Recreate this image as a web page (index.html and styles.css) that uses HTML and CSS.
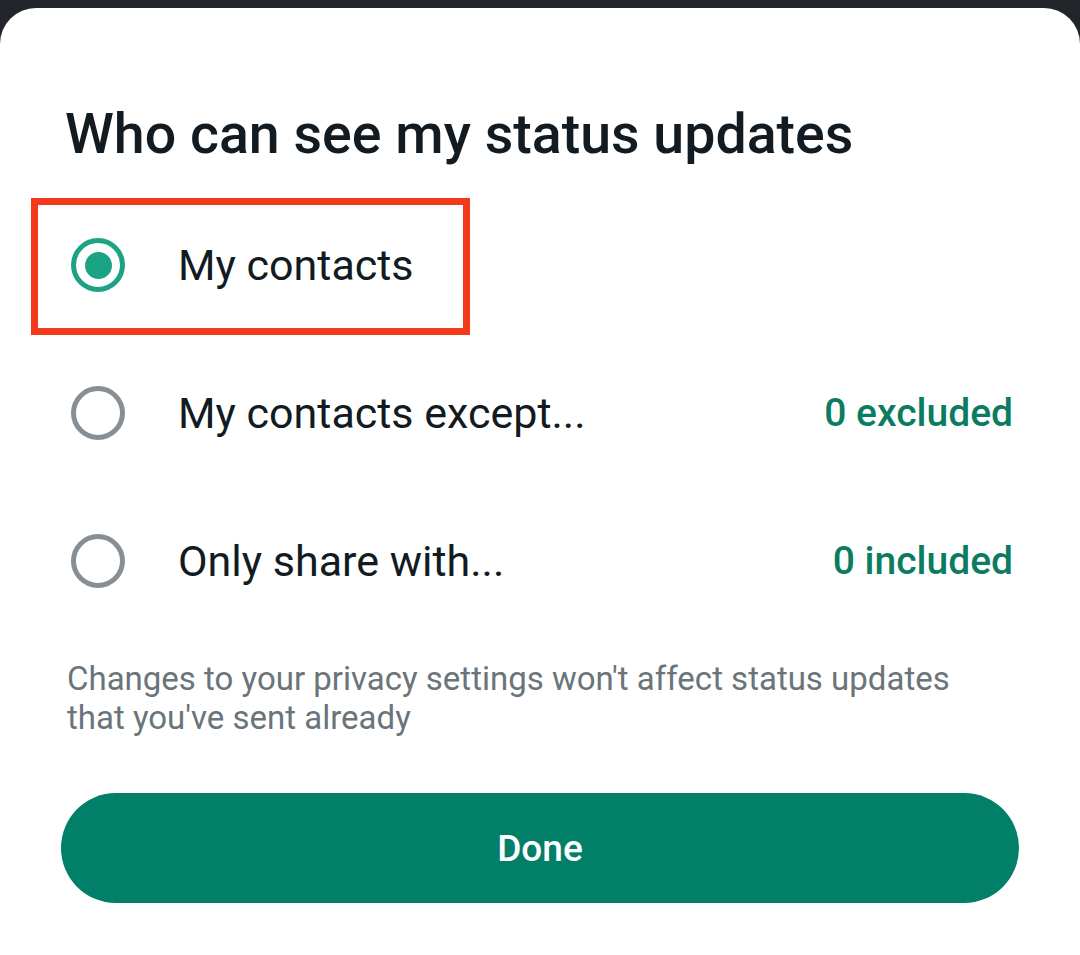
FILE: index.html
```html
<!DOCTYPE html>
<html lang="en">

<head>
    <meta charset="UTF-8">
    <title>Status privacy</title>
    <link rel="stylesheet" href="styles.css">
</head>

<body>

    <section class="sheet">
        <h1 class="titel">Who can see my status updates</h1>

        <div class="valg">
            <div class="raekke">
                <span class="radio valgt"></span>
                <span class="navn">My contacts</span>
                <span class="markering"></span>
            </div>
            <div class="raekke">
                <span class="radio"></span>
                <span class="navn">My contacts except...</span>
                <span class="antal">0 excluded</span>
            </div>
            <div class="raekke">
                <span class="radio"></span>
                <span class="navn">Only share with...</span>
                <span class="antal">0 included</span>
            </div>
        </div>

        <p class="note">Changes to your privacy settings won't affect status updates that you've sent already</p>

        <button class="done">Done</button>
    </section>

</body>

</html>
```

FILE: styles.css
```css
body {
    margin: 0;
    background-color: #22262b;
    font-family: Roboto, "Liberation Sans", sans-serif;
}

.sheet {
    margin-top: 8px;
    min-height: 947px;
    box-sizing: border-box;
    background-color: white;
    border-radius: 36px 36px 0 0;
    padding: 96px 61px 0 61px;
}

.titel {
    margin: 0 0 0 4px;
    font-size: 55.5px;
    line-height: 62px;
    font-weight: 500;
    color: #121b22;
}

.valg {
    margin-top: 25px;
}

.raekke {
    position: relative;
    display: flex;
    align-items: center;
    height: 148px;
    padding-left: 10px;
    padding-right: 6px;
}

.radio {
    width: 54px;
    height: 54px;
    box-sizing: border-box;
    border: 5px solid #878e94;
    border-radius: 50%;
    display: flex;
    align-items: center;
    justify-content: center;
}

.radio.valgt {
    border-color: #1ca383;
}

.radio.valgt::after {
    content: "";
    width: 27px;
    height: 27px;
    border-radius: 50%;
    background-color: #1ca383;
}

.navn {
    flex: 1;
    margin-left: 53px;
    font-size: 43px;
    color: #111b21;
}

.antal {
    font-size: 39px;
    font-weight: 500;
    color: #0b7b62;
}

/* rød ramme rundt om det valgte punkt */
.markering {
    position: absolute;
    left: -30px;
    top: 7px;
    width: 439px;
    height: 137px;
    box-sizing: border-box;
    border: 7px solid #f3391b;
}

.note {
    margin: 24px 0 0 6px;
    font-size: 33px;
    line-height: 39px;
    color: #6a7479;
    max-width: 900px;
}

.done {
    display: block;
    width: 100%;
    height: 110px;
    margin-top: 56px;
    border: none;
    border-radius: 55px;
    background-color: #017f69;
    color: white;
    font-family: Roboto, "Liberation Sans", sans-serif;
    font-size: 37px;
    font-weight: 500;
}
```
